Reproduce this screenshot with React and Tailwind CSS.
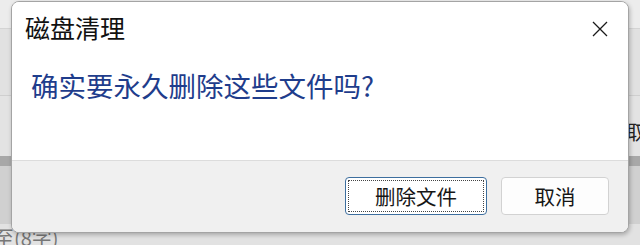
const font = "font-['Noto_Sans_CJK_SC','Noto_Sans',sans-serif]";

function CloseIcon() {
  return (
    <svg width="16" height="16" viewBox="0 0 16 16" className="mt-[6px] text-[#1a1a1a]">
      <path d="M1 1 L15 15 M15 1 L1 15" stroke="currentColor" strokeWidth="1.3" fill="none" />
    </svg>
  );
}

function Backdrop() {
  return (
    <div className={`flex h-full w-full flex-col ${font}`}>
      <div className="h-[28px] bg-[#ececec]" />
      <div className="h-px bg-[#d4d4d4]" />
      <div className="h-[66px] bg-[#e1e1e1]" />
      <div className="h-px bg-[#cfcfcf]" />
      <div className="flex h-[60px] items-center justify-end bg-[#e3e3e3] pt-[12px] text-[20px] leading-none text-[#222]">
        <span className="mr-[-26px]">取消</span>
      </div>
      <div className="h-[10px] bg-[#a8a8a8]" />
      <div className="h-[58px] bg-[#d0d0d0]" />
      <div className="flex h-[21px] items-end bg-[#e2e2e2] text-[20px] leading-none text-[#777]">
        <span className="ml-[-6px] mb-[-3px]">至(8字)</span>
      </div>
    </div>
  );
}

function Dialog() {
  return (
    <div
      className={`absolute left-[11px] top-[1px] flex h-[232px] w-[618px] flex-col overflow-hidden rounded-[8px] border border-[#a4a4a4] bg-white shadow-[1px_2px_4px_rgba(0,0,0,0.25)] ${font}`}
    >
      <div className="flex h-[158px] flex-col bg-white">
        <div className="flex items-start justify-between pl-[13px] pr-[20px] pt-[13px]">
          <span className="text-[25px] leading-none text-[#111]">磁盘清理</span>
          <CloseIcon />
        </div>
        <div className="pl-[19px] pt-[32px] text-[27.5px] leading-none text-[#1f3d8c]">
          确实要永久删除这些文件吗?
        </div>
      </div>
      <div className="flex flex-1 items-start justify-end gap-[14px] border-t border-[#dcdcdc] bg-[#f0f0f0] pr-[19px] pt-[16px]">
        <button className="flex h-[38px] w-[142px] items-center justify-center rounded-[4px] border border-[#3d6e9e] bg-white p-[2px]">
          <span className="flex h-full w-full items-center justify-center border border-dotted border-[#444] text-[20.5px] leading-none text-[#161616]">
            删除文件
          </span>
        </button>
        <button className="flex h-[38px] w-[108px] items-center justify-center rounded-[4px] border border-[#d2d2d2] bg-[#fdfdfd] text-[20.5px] leading-none text-[#161616]">
          取消
        </button>
      </div>
    </div>
  );
}

export default function App() {
  return (
    <div className="relative h-[245px] w-[640px] overflow-hidden bg-[#e0e0e0]">
      <Backdrop />
      <Dialog />
    </div>
  );
}
